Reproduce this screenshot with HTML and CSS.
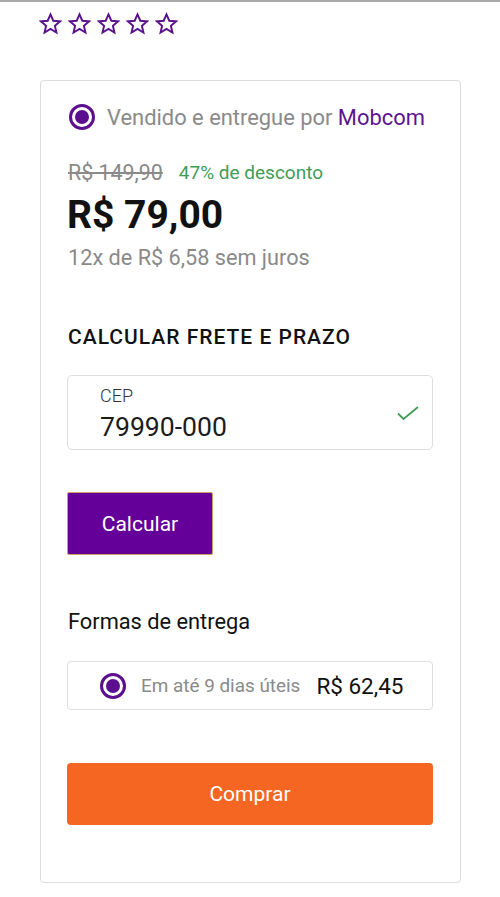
FILE: index.html
```html
<!DOCTYPE html>
<html lang="pt-BR">
<head>
<meta charset="utf-8">
<title>Produto</title>
<link rel="stylesheet" href="styles.css">
</head>
<body>
<div class="topline"></div>
<div class="stars">
  <svg class="star" viewBox="0 0 24 24"><path d="M12 2.5l2.9 6.6 7.1.6-5.4 4.7 1.6 7-6.2-3.7-6.2 3.7 1.6-7L2 9.7l7.1-.6z"/></svg>
  <svg class="star" viewBox="0 0 24 24"><path d="M12 2.5l2.9 6.6 7.1.6-5.4 4.7 1.6 7-6.2-3.7-6.2 3.7 1.6-7L2 9.7l7.1-.6z"/></svg>
  <svg class="star" viewBox="0 0 24 24"><path d="M12 2.5l2.9 6.6 7.1.6-5.4 4.7 1.6 7-6.2-3.7-6.2 3.7 1.6-7L2 9.7l7.1-.6z"/></svg>
  <svg class="star" viewBox="0 0 24 24"><path d="M12 2.5l2.9 6.6 7.1.6-5.4 4.7 1.6 7-6.2-3.7-6.2 3.7 1.6-7L2 9.7l7.1-.6z"/></svg>
  <svg class="star" viewBox="0 0 24 24"><path d="M12 2.5l2.9 6.6 7.1.6-5.4 4.7 1.6 7-6.2-3.7-6.2 3.7 1.6-7L2 9.7l7.1-.6z"/></svg>
</div>

<div class="card">
  <div class="seller">
    <span class="radio"></span>
    <span class="seller-text">Vendido e entregue por <span class="brand">Mobcom</span></span>
  </div>

  <div class="old-row">
    <span class="old-price">R$ 149,90</span>
    <span class="discount">47% de desconto</span>
  </div>
  <div class="price">R$ 79,00</div>
  <div class="installments">12x de R$ 6,58 sem juros</div>

  <div class="heading">CALCULAR FRETE E PRAZO</div>

  <div class="field">
    <div class="field-text">
      <div class="field-label">CEP</div>
      <div class="field-value">79990-000</div>
    </div>
    <svg class="check" viewBox="0 0 22 14"><path d="M1 7.5l5.5 5.5L21 1"/></svg>
  </div>

  <button class="btn-calc">Calcular</button>

  <div class="subheading">Formas de entrega</div>

  <div class="delivery">
    <span class="radio"></span>
    <span class="delivery-time">Em até 9 dias úteis</span>
    <span class="delivery-price">R$ 62,45</span>
  </div>

  <button class="btn-buy">Comprar</button>
</div>
</body>
</html>
```

FILE: styles.css
```css
html, body {
  margin: 0;
  padding: 0;
  background: #ffffff;
}
body {
  font-family: Roboto, "Noto Sans", "Liberation Sans", sans-serif;
  color: #111;
  width: 500px;
}
.topline {
  height: 2px;
  background: #a9a9a9;
}
.stars {
  display: flex;
  gap: 6px;
  padding: 10px 0 0 39px;
  height: 36px;
}
.star {
  width: 23px;
  height: 23px;
  fill: none;
  stroke: #5a118c;
  stroke-width: 2;
  stroke-linejoin: miter;
}
.card {
  margin: 32px 0 0 40px;
  border: 1px solid #dcdcdc;
  border-radius: 4px;
  padding: 21px 27px 57px 26px;
  box-sizing: border-box;
  width: 421px;
  display: flex;
  flex-direction: column;
}
.seller {
  display: flex;
  align-items: center;
  height: 30px;
  padding-left: 2px;
  gap: 12px;
}
.radio {
  width: 26px;
  height: 26px;
  box-sizing: border-box;
  border: 3px solid #5c0f8f;
  border-radius: 50%;
  padding: 3px;
  flex: none;
  display: flex;
}
.radio::after {
  content: "";
  flex: 1;
  border-radius: 50%;
  background: #5c0f8f;
}
.seller-text {
  font-size: 21.9px;
  color: #8a8a8a;
}
.brand {
  color: #5c1490;
}
.old-row {
  margin-top: 27px;
  height: 26px;
  display: flex;
  align-items: center;
  gap: 16px;
  padding-left: 1px;
}
.old-price {
  font-size: 21.4px;
  color: #8a8a8a;
  text-decoration: line-through;
  text-decoration-thickness: 1.5px;
}
.discount {
  font-size: 19px;
  color: #3f9c55;
}
.price {
  margin-top: 8px;
  height: 44px;
  line-height: 44px;
  font-size: 39px;
  font-weight: 700;
  color: #111;
}
.installments {
  margin-top: 7px;
  height: 28px;
  line-height: 28px;
  font-size: 21.7px;
  color: #8a8a8a;
  padding-left: 1px;
}
.heading {
  margin-top: 51px;
  height: 28px;
  line-height: 28px;
  font-size: 21px;
  font-weight: 500;
  color: #111;
  letter-spacing: 1px;
  padding-left: 1px;
}
.field {
  margin-top: 24px;
  height: 75px;
  box-sizing: border-box;
  border: 1px solid #dedede;
  border-radius: 5px;
  display: flex;
  align-items: center;
  justify-content: space-between;
  padding: 0 13px 0 32px;
}
.field-text {
  display: flex;
  flex-direction: column;
  padding-top: 4px;
}
.field-label {
  font-size: 18px;
  font-weight: 300;
  line-height: 20px;
  color: #333;
  margin-bottom: 4px;
}
.field-value {
  font-size: 26.6px;
  line-height: 34px;
  color: #1c1c1c;
}
.check {
  width: 22px;
  height: 14px;
  fill: none;
  stroke: #3f9c55;
  stroke-width: 1.8;
}
.btn-calc {
  margin-top: 42px;
  align-self: flex-start;
  width: 146px;
  height: 63px;
  background: #640099;
  border: 1px solid #d0a060;
  border-radius: 2px;
  color: #ffffff;
  font-family: inherit;
  font-size: 21px;
  padding: 0;
}
.subheading {
  margin-top: 53px;
  height: 28px;
  line-height: 28px;
  font-size: 21.8px;
  color: #111;
  padding-left: 1px;
}
.delivery {
  margin-top: 25px;
  height: 49px;
  box-sizing: border-box;
  border: 1px solid #dedede;
  border-radius: 4px;
  display: flex;
  align-items: center;
  padding-left: 32px;
}
.delivery .radio {
  margin-right: 15px;
}
.delivery-time {
  font-size: 18.9px;
  color: #8a8a8a;
}
.delivery-price {
  margin-left: 16px;
  font-size: 22.5px;
  color: #111;
}
.btn-buy {
  margin-top: 53px;
  height: 62px;
  width: 100%;
  background: #f46622;
  border: none;
  border-radius: 4px;
  color: #ffffff;
  font-family: inherit;
  font-size: 21px;
  padding: 0;
}
```
